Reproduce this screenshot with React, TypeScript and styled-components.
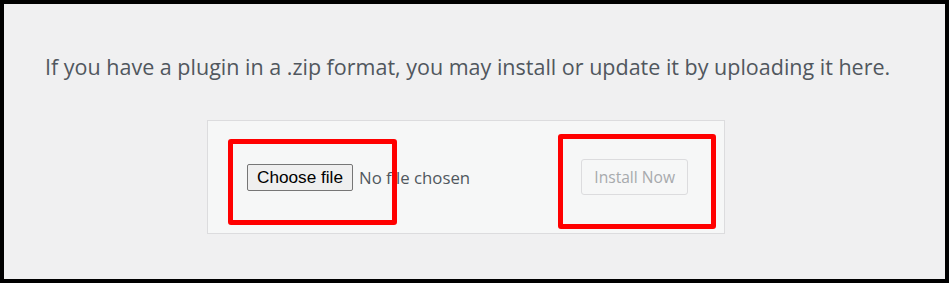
import React from "react";
import styled, { createGlobalStyle } from "styled-components";

const Global = createGlobalStyle`
  html, body { margin: 0; padding: 0; background: #f0f0f1; }
  * { box-sizing: border-box; }
`;

const Frame = styled.div`
  position: relative;
  width: 949px;
  height: 283px;
  background: #f0f0f1;
  border-style: solid;
  border-color: #000;
  border-width: 4px 4px 4px 4px;
  padding: 48px 0 0 41px;
  font-family: "Open Sans", "Noto Sans", sans-serif;
`;

const Intro = styled.p`
  margin: 0;
  font-size: 21.5px;
  line-height: 30px;
  color: #50575e;
  white-space: nowrap;
`;

const UploadBox = styled.div`
  margin: 38px 0 0 162px;
  width: 518px;
  height: 114px;
  background: #f6f7f7;
  border: 1px solid #dcdcde;
  display: flex;
  align-items: center;
  padding: 0 0 0 39px;
`;

const FilePicker = styled.div`
  display: flex;
  align-items: center;
  gap: 6px;
`;

const ChooseButton = styled.button`
  height: 27px;
  width: 106px;
  padding: 0;
  background: #efefef;
  border: 1px solid #767676;
  border-radius: 2px;
  font-family: "Liberation Sans", Arial, sans-serif;
  font-size: 17.2px;
  color: #000;
`;

const NoFile = styled.span`
  font-family: "Open Sans", "Noto Sans", sans-serif;
  font-size: 16.8px;
  color: #50575e;
`;

const InstallButton = styled.button`
  margin-left: 111px;
  height: 36px;
  width: 107px;
  padding: 0;
  background: #f6f7f7;
  border: 1px solid #dcdcde;
  border-radius: 3px;
  font-family: "Open Sans", "Noto Sans", sans-serif;
  font-size: 15.6px;
  color: #a7aaad;
`;

const Highlight = styled.div<{ $x: number; $y: number; $w: number; $h: number }>`
  position: absolute;
  left: ${(p) => p.$x}px;
  top: ${(p) => p.$y}px;
  width: ${(p) => p.$w}px;
  height: ${(p) => p.$h}px;
  border: 5px solid #ff0000;
  border-radius: 3px;
  pointer-events: none;
`;

export default function App() {
  return (
    <>
      <Global />
      <Frame>
        <Intro>
          If you have a plugin in a .zip format, you may install or update it by uploading it here.
        </Intro>
        <UploadBox>
          <FilePicker>
            <ChooseButton>Choose file</ChooseButton>
            <NoFile>No file chosen</NoFile>
          </FilePicker>
          <InstallButton disabled>Install Now</InstallButton>
        </UploadBox>
        <Highlight $x={224} $y={135} $w={169} $h={86} />
        <Highlight $x={554} $y={130} $w={158} $h={95} />
      </Frame>
    </>
  );
}
